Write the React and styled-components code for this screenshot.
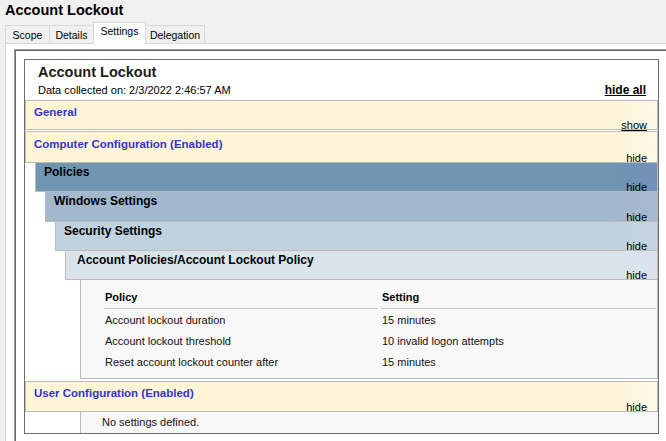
import React from 'react';
import styled, { createGlobalStyle } from 'styled-components';

const GlobalStyle = createGlobalStyle`
  html, body { margin: 0; padding: 0; background: #f0f0f0; overflow: hidden; }
  body { font-family: "Liberation Sans", Arial, sans-serif; color: #000; }
`;

const tones = {
  yellow: ['#fdf5d6', '#fef9e8'],
  l1: ['#6f95b0', '#7290b8'],
  l2: ['#a2b8cc', '#a8b9d0'],
  l3: ['#bfd2de', '#c6d3e2'],
  l4: ['#d8e3ea', '#dce2ec'],
};

const Window = styled.div`
  width: 666px;
  height: 441px;
  box-sizing: border-box;
  padding-left: 5px;
  display: flex;
  flex-direction: column;
  overflow: hidden;
`;

const Title = styled.div`
  height: 22px;
  box-sizing: border-box;
  padding-top: 1px;
  font-size: 14.5px;
  font-weight: bold;
  line-height: 18px;
`;

const TabStrip = styled.div`
  display: flex;
  align-items: flex-end;
  height: 21px;
  position: relative;
  z-index: 1;
`;

const Tab = styled.div`
  box-sizing: border-box;
  width: ${(p) => p.$w}px;
  height: ${(p) => (p.$active ? 22 : 18)}px;
  margin-bottom: ${(p) => (p.$active ? -1 : 0)}px;
  margin-left: ${(p) => (p.$first ? 0 : -1)}px;
  border: 1px solid #d9d9d9;
  border-bottom: none;
  background: ${(p) => (p.$active ? '#ffffff' : '#f0f0f0')};
  position: relative;
  z-index: ${(p) => (p.$active ? 2 : 1)};
  padding-top: ${(p) => (p.$active ? 1 : 2)}px;
  font-size: 10.5px;
  line-height: 14px;
  text-align: center;
`;

const Panel = styled.div`
  flex: 1;
  display: flex;
  background: #ffffff;
  border-top: 1px solid #d9d9d9;
  border-left: 1px solid #d9d9d9;
  padding: 5px 0 0 8px;
  min-height: 0;
`;

const Browser = styled.div`
  flex: 1;
  display: flex;
  flex-direction: column;
  align-items: flex-start;
  background: #ffffff;
  border-top: 1px solid #a0a0a0;
  border-left: 1px solid #a0a0a0;
  box-shadow: inset 1px 1px 0 #696969;
  padding: 9px 0 0 9px;
`;

const Report = styled.div`
  width: 635px;
  box-sizing: border-box;
  border: 1px solid #6e6e6e;
  background: #ffffff;
  display: flex;
  flex-direction: column;
`;

const Header = styled.div`
  height: 40px;
  box-sizing: border-box;
  padding: 3px 12px 0 13px;
`;

const HeaderTitle = styled.div`
  font-size: 14.5px;
  font-weight: bold;
  line-height: 18px;
  color: #1c1c1c;
`;

const MetaRow = styled.div`
  display: flex;
  justify-content: space-between;
  align-items: baseline;
  margin-top: 2px;
  font-size: 11px;
  line-height: 14px;
`;

const HideAll = styled.span`
  font-size: 12px;
  font-weight: bold;
  text-decoration: underline;
`;

const Bar = styled.div`
  display: flex;
  flex-direction: column;
  box-sizing: border-box;
  height: ${(p) => p.$h}px;
  margin-left: ${(p) => p.$indent || 0}px;
  margin-top: ${(p) => p.$mt || 0}px;
  padding: ${(p) => p.$pt}px 10px 0 ${(p) => p.$pl || 8}px;
  border: 1px solid #bbbbbb;
  border-top: ${(p) => (p.$tone === 'yellow' ? '1px solid #bbbbbb' : 'none')};
  background: linear-gradient(
    to right,
    ${(p) => tones[p.$tone][0]} calc(100% - 45px),
    ${(p) => tones[p.$tone][1]}
  );
`;

const BarTitle = styled.div`
  font-weight: bold;
  line-height: 14px;
  font-size: ${(p) => (p.$blue ? 11.5 : 12)}px;
  color: ${(p) => (p.$blue ? '#3434cc' : '#000')};
  white-space: nowrap;
`;

const Toggle = styled.span`
  margin-top: auto;
  margin-bottom: -2px;
  align-self: flex-end;
  font-size: 11px;
  line-height: 11px;
  text-decoration: ${(p) => (p.$underline ? 'underline' : 'none')};
`;

const TableBlock = styled.div`
  margin-left: 55px;
  background: #f8f8f8;
  border-left: 1px solid #bbbbbb;
  border-right: 1px solid #bbbbbb;
  border-bottom: 1px solid #bbbbbb;
  padding: 10px 1px 6px 23px;
`;

const Grid = styled.div`
  display: grid;
  grid-template-columns: 274px 1fr;
  column-gap: 3px;
`;

const HeadCell = styled.div`
  font-size: 11px;
  font-weight: bold;
  line-height: 14px;
  padding: 0 0 4px 1px;
  border-bottom: 1px solid #c8c8c8;
`;

const Cell = styled.div`
  font-size: 11px;
  line-height: 14px;
  padding: 4px 0 3px 1px;
  color: #111;
`;

const EmptyRow = styled.div`
  margin-left: 55px;
  height: 21px;
  box-sizing: border-box;
  background: #f8f8f8;
  border-left: 1px solid #bbbbbb;
  padding: 3px 0 0 21px;
  font-size: 11px;
  line-height: 14px;
  color: #111;
`;

const tabs = [
  { label: 'Scope', w: 45 },
  { label: 'Details', w: 45 },
  { label: 'Settings', w: 53, active: true },
  { label: 'Delegation', w: 60 },
];

const rows = [
  ['Account lockout duration', '15 minutes'],
  ['Account lockout threshold', '10 invalid logon attempts'],
  ['Reset account lockout counter after', '15 minutes'],
];

export default function App() {
  return (
    <>
      <GlobalStyle />
      <Window>
        <Title>Account Lockout</Title>
        <TabStrip>
          {tabs.map((t, i) => (
            <Tab key={t.label} $w={t.w} $active={t.active} $first={i === 0}>
              {t.label}
            </Tab>
          ))}
        </TabStrip>
        <Panel>
          <Browser>
            <Report>
              <Header>
                <HeaderTitle>Account Lockout</HeaderTitle>
                <MetaRow>
                  <span>Data collected on: 2/3/2022 2:46:57 AM</span>
                  <HideAll>hide all</HideAll>
                </MetaRow>
              </Header>

              <Bar $tone="yellow" $h={30} $pt={4}>
                <BarTitle $blue>General</BarTitle>
                <Toggle $underline>show</Toggle>
              </Bar>

              <Bar $tone="yellow" $h={32} $pt={5} $mt={1}>
                <BarTitle $blue>Computer Configuration (Enabled)</BarTitle>
                <Toggle>hide</Toggle>
              </Bar>
              <Bar $tone="l1" $h={29} $pt={2} $indent={10}>
                <BarTitle>Policies</BarTitle>
                <Toggle>hide</Toggle>
              </Bar>
              <Bar $tone="l2" $h={30} $pt={2} $indent={20}>
                <BarTitle>Windows Settings</BarTitle>
                <Toggle>hide</Toggle>
              </Bar>
              <Bar $tone="l3" $h={29} $pt={2} $indent={30}>
                <BarTitle>Security Settings</BarTitle>
                <Toggle>hide</Toggle>
              </Bar>
              <Bar $tone="l4" $h={29} $pt={2} $indent={40} $pl={11}>
                <BarTitle>Account Policies/Account Lockout Policy</BarTitle>
                <Toggle>hide</Toggle>
              </Bar>
              <TableBlock>
                <Grid>
                  <HeadCell>Policy</HeadCell>
                  <HeadCell>Setting</HeadCell>
                  {rows.map(([a, b]) => (
                    <React.Fragment key={a}>
                      <Cell>{a}</Cell>
                      <Cell>{b}</Cell>
                    </React.Fragment>
                  ))}
                </Grid>
              </TableBlock>

              <Bar $tone="yellow" $h={31} $pt={4} $mt={2}>
                <BarTitle $blue>User Configuration (Enabled)</BarTitle>
                <Toggle>hide</Toggle>
              </Bar>
              <EmptyRow>No settings defined.</EmptyRow>
            </Report>
          </Browser>
        </Panel>
      </Window>
    </>
  );
}
